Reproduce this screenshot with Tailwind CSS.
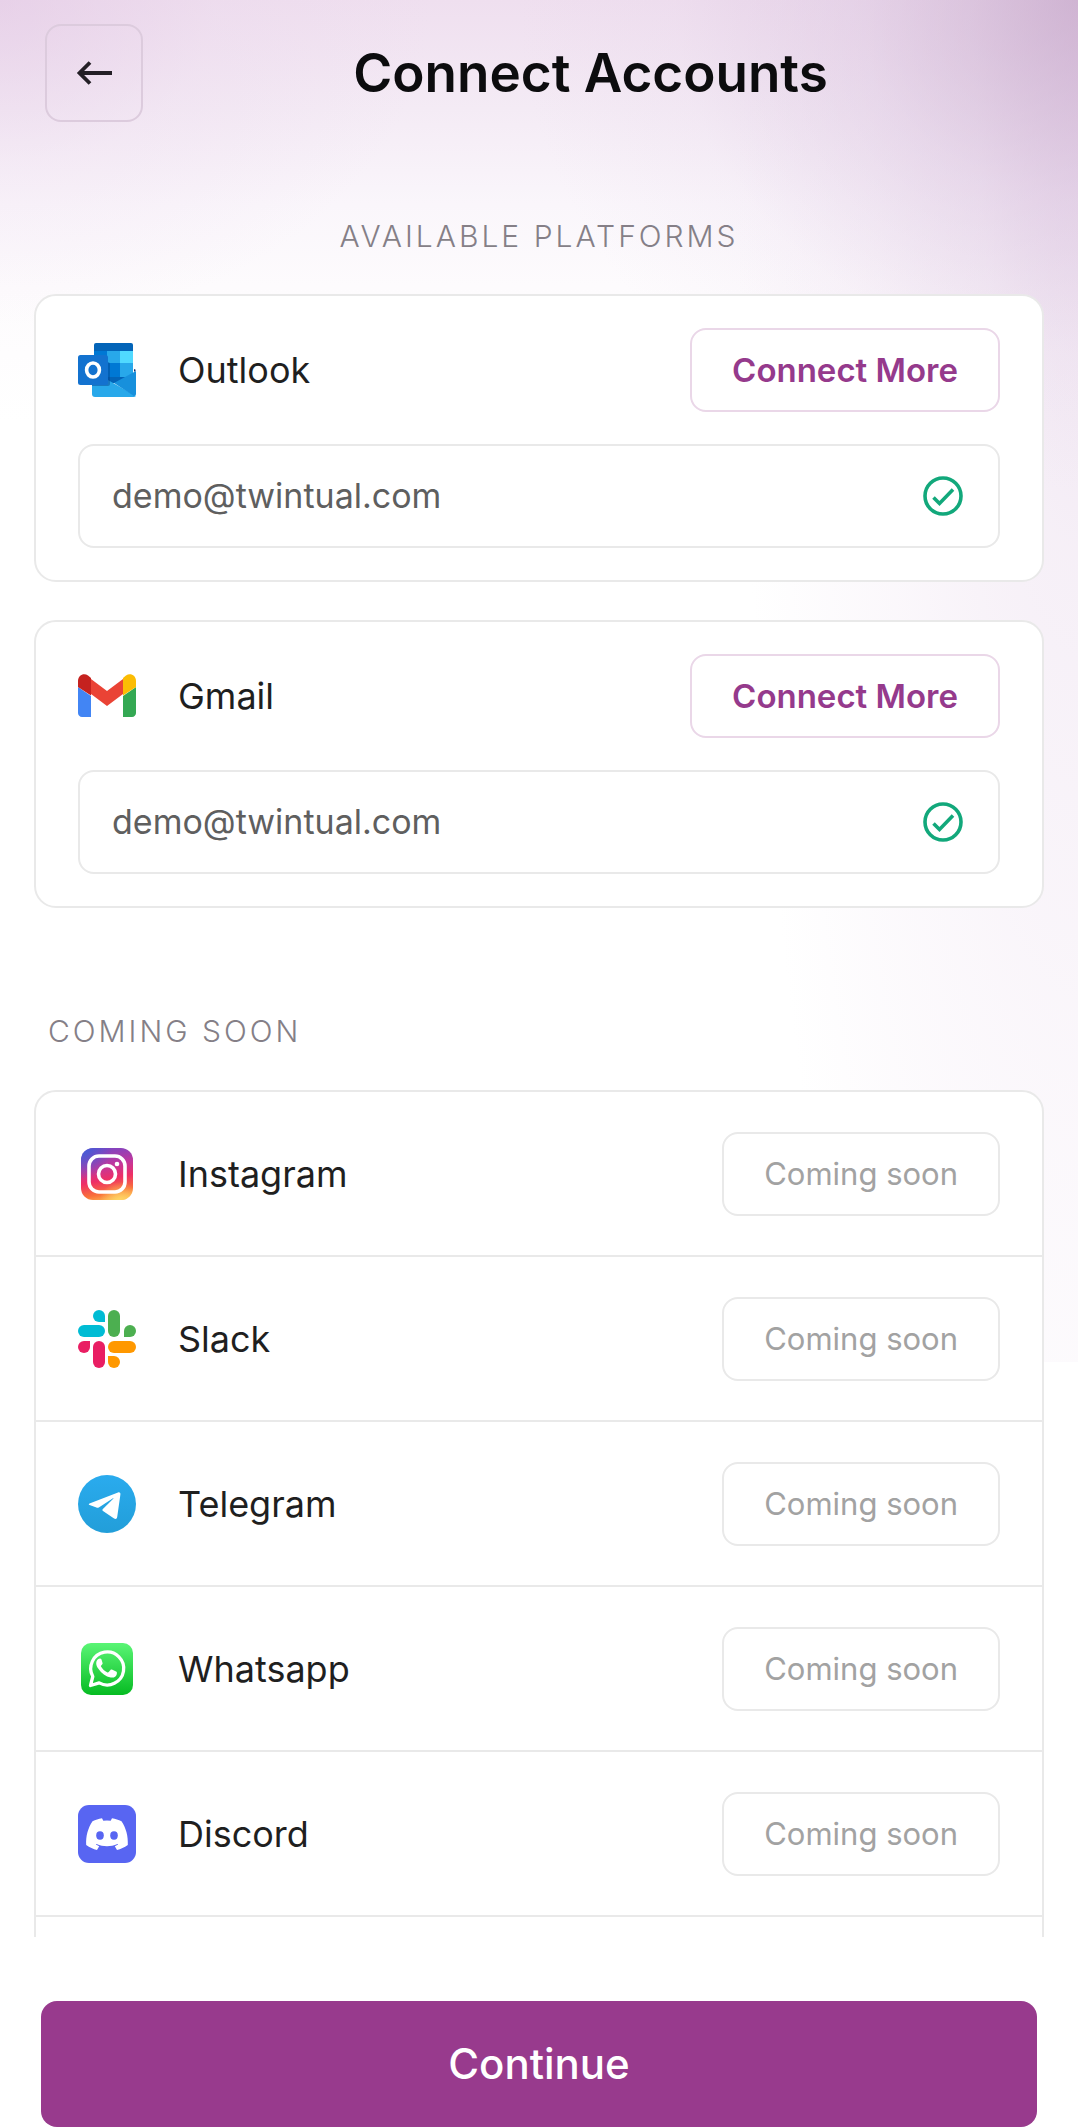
<!DOCTYPE html>
<html lang="en">
<head>
  <meta charset="UTF-8">
  <meta name="viewport" content="width=device-width, initial-scale=1.0">
  <title>Connect Accounts</title>
  <script src="https://cdn.jsdelivr.net/npm/@tailwindcss/browser@4"></script>
  <style>
    body { font-family: Inter, "Liberation Sans", sans-serif; }
    .page-glow {
      background:
        radial-gradient(ellipse 52% 36% at 100% 0%, rgba(192, 160, 196, 0.55), rgba(208, 180, 214, 0.32) 40%, rgba(225, 205, 230, 0.12) 72%, rgba(235, 215, 238, 0) 100%),
        radial-gradient(ellipse 32% 135% at 100% 0%, rgba(214, 186, 218, 0.5), rgba(230, 212, 233, 0.36) 30%, rgba(240, 228, 242, 0.28) 60%, rgba(255, 255, 255, 0) 100%),
        radial-gradient(ellipse 40% 24% at 0% 0%, rgba(222, 192, 224, 0.45), rgba(232, 210, 234, 0.22) 50%, rgba(255, 255, 255, 0) 100%),
        linear-gradient(to bottom, #efdfef 0%, #f4ebf5 8%, #faf6fb 15%, #fdfbfd 21%, #ffffff 31%);
    }
  </style>
</head>
<body class="relative flex h-screen flex-col overflow-hidden bg-white text-[#1f1f1f]">
  <div class="page-glow absolute inset-x-0 top-0 -z-10 h-[64%]"></div>

  <header class="grid grid-cols-[98px_1fr] items-center pt-6 pl-[45px]">
    <button type="button" aria-label="Back" class="flex size-[98px] items-center justify-center rounded-2xl border-2 border-[#dccbdd]">
      <svg class="size-12" viewBox="0 0 48 48" fill="none" stroke="#241f26" stroke-width="3.800">
        <path d="M42 24H10M20 13.500L9.500 24 20 34.500" />
      </svg>
    </button>
    <h1 class="pr-[40px] text-center text-[53px] leading-[64px] font-semibold text-[#0c0c0e]">Connect Accounts</h1>
  </header>

  <main class="min-h-0 flex-1 overflow-hidden px-[34px]">
    <h2 class="mt-[94px] text-center text-[30px] leading-10 font-light tracking-[3px] text-[#857f87]">AVAILABLE PLATFORMS</h2>

    <section class="mt-[38px] rounded-[22px] border-2 border-[#e9e9e9] bg-white px-[42px] py-8">
      <div class="flex items-center">
        <svg class="size-[58px]" viewBox="0 0 58 58">
          <rect x="16" y="2" width="39" height="40" rx="2" fill="#0364b8" />
          <path d="M29 10h13v12H29z" fill="#28a8ea" />
          <path d="M42 10h13v12H42z" fill="#50d9ff" />
          <path d="M16 10h13v13H16z" fill="#0078d4" />
          <path d="M29 22h13v14H29z" fill="#0078d4" />
          <path d="M42 22h13v14H42z" fill="#28a8ea" />
          <path d="M16 22h13v18H16z" fill="#0a5fad" />
          <path d="M56 28l2 1-2 2z" fill="#0a2767" />
          <path d="M14 30l44 25c-.6.7-1.500 1-2.500 1H17c-2 0-3-1-3-3z" fill="#28a8ea" />
          <path d="M58 30L36 42l20 13c1 0 2-1 2-2z" fill="#1790dc" />
          <path d="M17 21h13c1 0 2 1 2 2v20c0 1-1 2-2 2H14V23z" fill="#05408f" opacity=".45" />
          <rect y="14" width="30" height="30" rx="2.500" fill="#1372cf" />
          <ellipse cx="15" cy="29" rx="6.400" ry="7" fill="none" stroke="#fff" stroke-width="3.600" />
        </svg>
        <h3 class="ml-[42px] flex-1 text-[36px] leading-[44px]">Outlook</h3>
        <button type="button" class="h-[84px] rounded-2xl border-2 border-[#ead7e8] px-10 text-[33px] leading-10 font-semibold text-[#953a8c]">Connect More</button>
      </div>
      <div class="mt-8 flex h-[104px] items-center justify-between rounded-2xl border-2 border-[#e9e9e9] pr-[35px] pl-8">
        <span class="text-[34px] leading-10 text-[#5f5f5f]">demo@twintual.com</span>
        <svg class="size-10" viewBox="0 0 40 40" fill="none" stroke="#12a87b" stroke-width="3.600">
          <circle cx="20" cy="20" r="18" />
          <path d="M10.500 21.500l6 6L30 13.500" />
        </svg>
      </div>
    </section>

    <section class="mt-[38px] rounded-[22px] border-2 border-[#e9e9e9] bg-white px-[42px] py-8">
      <div class="flex items-center">
        <svg class="size-[58px]" viewBox="0 0 58 58">
          <path d="M0 20l13 9v21H4c-2.200 0-4-1.800-4-4z" fill="#4285f4" />
          <path d="M58 20l-13 9v21h9c2.200 0 4-1.800 4-4z" fill="#34a853" />
          <path d="M13 12l16 12 16-12v15L29 39 13 27z" fill="#ea4335" />
          <path d="M0 20v-6c0-6 6-8.500 10-5.500L13 11v17.500z" fill="#c5221f" />
          <path d="M58 20v-6c0-6-6-8.500-10-5.500L45 11v17.500z" fill="#fbbc04" />
        </svg>
        <h3 class="ml-[42px] flex-1 text-[36px] leading-[44px]">Gmail</h3>
        <button type="button" class="h-[84px] rounded-2xl border-2 border-[#ead7e8] px-10 text-[33px] leading-10 font-semibold text-[#953a8c]">Connect More</button>
      </div>
      <div class="mt-8 flex h-[104px] items-center justify-between rounded-2xl border-2 border-[#e9e9e9] pr-[35px] pl-8">
        <span class="text-[34px] leading-10 text-[#5f5f5f]">demo@twintual.com</span>
        <svg class="size-10" viewBox="0 0 40 40" fill="none" stroke="#12a87b" stroke-width="3.600">
          <circle cx="20" cy="20" r="18" />
          <path d="M10.500 21.500l6 6L30 13.500" />
        </svg>
      </div>
    </section>

    <h2 class="mt-[103px] pl-[14px] text-[30px] leading-10 font-light tracking-[3px] text-[#857f87]">COMING SOON</h2>

    <ul class="mt-[39px] divide-y-2 divide-[#e9e9e9] rounded-t-[22px] border-2 border-[#e9e9e9] bg-white">
      <li class="flex h-[165px] items-center px-[42px]">
        <svg class="size-[58px]" viewBox="0 0 58 58">
          <defs>
            <linearGradient id="ig" x1=".4" y1="0" x2=".6" y2="1">
              <stop offset="0" stop-color="#7a45c4" />
              <stop offset=".35" stop-color="#c2379c" />
              <stop offset=".6" stop-color="#ee2f66" />
              <stop offset=".85" stop-color="#f9703a" />
              <stop offset="1" stop-color="#fdb04c" />
            </linearGradient>
            <radialGradient id="igBlue" cx="0" cy="0" r=".6">
              <stop offset="0" stop-color="#3f5fd8" />
              <stop offset="1" stop-color="#3f5fd8" stop-opacity="0" />
            </radialGradient>
            <radialGradient id="igYellow" cx=".75" cy="1.050" r=".4">
              <stop offset="0" stop-color="#ffd968" />
              <stop offset="1" stop-color="#ffd968" stop-opacity="0" />
            </radialGradient>
          </defs>
          <rect x="3" y="3" width="52" height="52" rx="12" fill="url(#ig)" />
          <rect x="3" y="3" width="52" height="52" rx="12" fill="url(#igBlue)" />
          <rect x="3" y="3" width="52" height="52" rx="12" fill="url(#igYellow)" />
          <rect x="11" y="11" width="36" height="36" rx="10" fill="none" stroke="#fff" stroke-width="3.600" />
          <circle cx="29" cy="29" r="8.500" fill="none" stroke="#fff" stroke-width="3.600" />
          <circle cx="39" cy="19" r="2.300" fill="#fff" />
        </svg>
        <h3 class="ml-[42px] flex-1 text-[36px] leading-[44px]">Instagram</h3>
        <button type="button" disabled class="h-[84px] rounded-2xl border-2 border-[#e9e9e9] px-10 text-[31px] leading-10 text-[#a2a2a2]">Coming soon</button>
      </li>
      <li class="flex h-[165px] items-center px-[42px]">
        <svg class="size-[58px]" viewBox="0 0 58 58">
          <g fill="#00bcd4">
            <rect y="15" width="27" height="12" rx="6" />
            <path d="M27 12h-6a6 6 0 1 1 6-6z" />
          </g>
          <g fill="#4caf50">
            <rect x="30" width="12" height="27" rx="6" />
            <path d="M46 27v-6a6 6 0 1 1 6 6z" />
          </g>
          <g fill="#ff9800">
            <rect x="30" y="31" width="28" height="12" rx="6" />
            <path d="M30 46h6a6 6 0 1 1-6 6z" />
          </g>
          <g fill="#e91e63">
            <rect x="15" y="31" width="12" height="27" rx="6" />
            <path d="M12 31v6a6 6 0 1 1-6-6z" />
          </g>
        </svg>
        <h3 class="ml-[42px] flex-1 text-[36px] leading-[44px]">Slack</h3>
        <button type="button" disabled class="h-[84px] rounded-2xl border-2 border-[#e9e9e9] px-10 text-[31px] leading-10 text-[#a2a2a2]">Coming soon</button>
      </li>
      <li class="flex h-[165px] items-center px-[42px]">
        <svg class="size-[58px]" viewBox="0 0 58 58">
          <defs>
            <linearGradient id="tg" x1="0" y1="0" x2="0" y2="1">
              <stop offset="0" stop-color="#2aabee" />
              <stop offset="1" stop-color="#229ed9" />
            </linearGradient>
          </defs>
          <circle cx="29" cy="29" r="29" fill="url(#tg)" />
          <path d="M11.500 28.400L40 17.400c1.600-.6 2.700.3 2.400 2.200l-3.200 22.500c-.3 2-1.600 2.400-3.100 1.500L25 36c-.8-.6-.8-1.200-.1-1.900L35.500 23.600c.3-.4-.1-.5-.5-.3L20.800 32.400c-.9.500-1.600.5-2.400.2l-6.800-2.500c-1-.4-1.100-1.200-.1-1.700z" fill="#fff" />
        </svg>
        <h3 class="ml-[42px] flex-1 text-[36px] leading-[44px]">Telegram</h3>
        <button type="button" disabled class="h-[84px] rounded-2xl border-2 border-[#e9e9e9] px-10 text-[31px] leading-10 text-[#a2a2a2]">Coming soon</button>
      </li>
      <li class="flex h-[165px] items-center px-[42px]">
        <svg class="size-[58px]" viewBox="0 0 58 58">
          <defs>
            <linearGradient id="wa" x1="0" y1="0" x2="0" y2="1">
              <stop offset="0" stop-color="#5af575" />
              <stop offset="1" stop-color="#06bb22" />
            </linearGradient>
          </defs>
          <rect x="3" y="3" width="52" height="52" rx="10" fill="url(#wa)" />
          <path d="M12.500 45.500l2.300-9a16.500 16.500 0 1 1 6.400 6.400z" fill="none" stroke="#fff" stroke-width="3.300" stroke-linejoin="round" />
          <path d="M23.500 19.500c-.5-1-1-1-1.700-1-2 .3-3.600 2.400-3.600 4.700 0 2 1 4 2 5.300 3.500 5 7.500 8 12.500 9 3.300.6 6.200-1.300 6.200-4.600 0-.8-.2-1-.8-1.300l-4.200-2c-.6-.3-1-.2-1.400.3l-1.800 2.200c-.3.400-.7.500-1.200.3-3-1.200-5-3.200-6.500-5.800-.2-.4-.1-.8.2-1.100 1.600-1.700 1.600-2 1.200-3z" fill="#fff" />
        </svg>
        <h3 class="ml-[42px] flex-1 text-[36px] leading-[44px]">Whatsapp</h3>
        <button type="button" disabled class="h-[84px] rounded-2xl border-2 border-[#e9e9e9] px-10 text-[31px] leading-10 text-[#a2a2a2]">Coming soon</button>
      </li>
      <li class="flex h-[165px] items-center px-[42px]">
        <svg class="size-[58px]" viewBox="0 0 58 58">
          <rect width="58" height="58" rx="11" fill="#5865f2" />
          <path d="M24 13.200c-3.500.5-6.500 1.500-9.500 3C10 23 7.700 31 8.200 40c3.500 2.600 7 4 10.800 5l2.200-3.700-3.400-1.700.8-.6c6.600 3 14.200 3 20.800 0l.8.600-3.400 1.700L39 45c3.800-1 7.300-2.400 10.800-5 .5-9-1.800-17-6.300-23.800-3-1.500-6-2.500-9.500-3l-1.300 2.600a26 26 0 0 0-7.400 0z" fill="#fff" />
          <ellipse cx="22" cy="30.500" rx="3.800" ry="4.200" fill="#5865f2" />
          <ellipse cx="36" cy="30.500" rx="3.800" ry="4.200" fill="#5865f2" />
        </svg>
        <h3 class="ml-[42px] flex-1 text-[36px] leading-[44px]">Discord</h3>
        <button type="button" disabled class="h-[84px] rounded-2xl border-2 border-[#e9e9e9] px-10 text-[31px] leading-10 text-[#a2a2a2]">Coming soon</button>
      </li>
      <li class="h-[165px]"></li>
    </ul>
  </main>

  <footer class="bg-white px-[41px] pt-16 pb-px">
    <button type="button" class="h-[126px] w-full rounded-2xl bg-[#983a8d] text-[42px] leading-[52px] font-medium text-white">Continue</button>
  </footer>
</body>
</html>
